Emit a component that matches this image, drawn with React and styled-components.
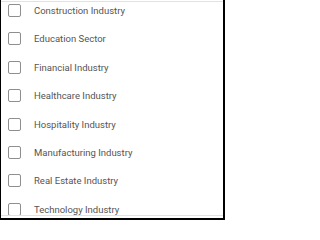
import React from "react";
import styled, { createGlobalStyle } from "styled-components";

const Global = createGlobalStyle`
  html, body { margin: 0; padding: 0; background: #fff; }
  * { box-sizing: border-box; }
`;

const Frame = styled.div`
  width: 225px;
  height: 220px;
  background: #fff;
  border-left: 1px solid #000;
  border-right: 2px solid #000;
  border-bottom: 2px solid #000;
  padding-top: 1px;
  overflow: hidden;
`;

const Panel = styled.div`
  height: 215px;
  border-top: 1px solid #e2e2e2;
  border-bottom: 1px solid #e2e2e2;
  overflow: hidden;
`;

const List = styled.ul`
  list-style: none;
  margin: -5.7px 0 0 0;
  padding: 0 0 0 7px;
`;

const Row = styled.li`
  height: 28.4px;
  display: flex;
  align-items: center;
  gap: 13px;
`;

const Box = styled.span`
  flex: none;
  width: 13px;
  height: 13px;
  border: 1.5px solid #8e8e8e;
  border-radius: 2px;
  background: #fff;
`;

const Label = styled.span`
  font-family: Roboto, "Liberation Sans", sans-serif;
  font-size: 9.5px;
  color: #555;
  white-space: nowrap;
`;

const items = [
  "Construction Industry",
  "Education Sector",
  "Financial Industry",
  "Healthcare Industry",
  "Hospitality Industry",
  "Manufacturing Industry",
  "Real Estate Industry",
  "Technology Industry",
];

export default function App() {
  return (
    <>
      <Global />
      <Frame>
        <Panel>
          <List>
            {items.map((t) => (
              <Row key={t}>
                <Box />
                <Label>{t}</Label>
              </Row>
            ))}
          </List>
        </Panel>
      </Frame>
    </>
  );
}
